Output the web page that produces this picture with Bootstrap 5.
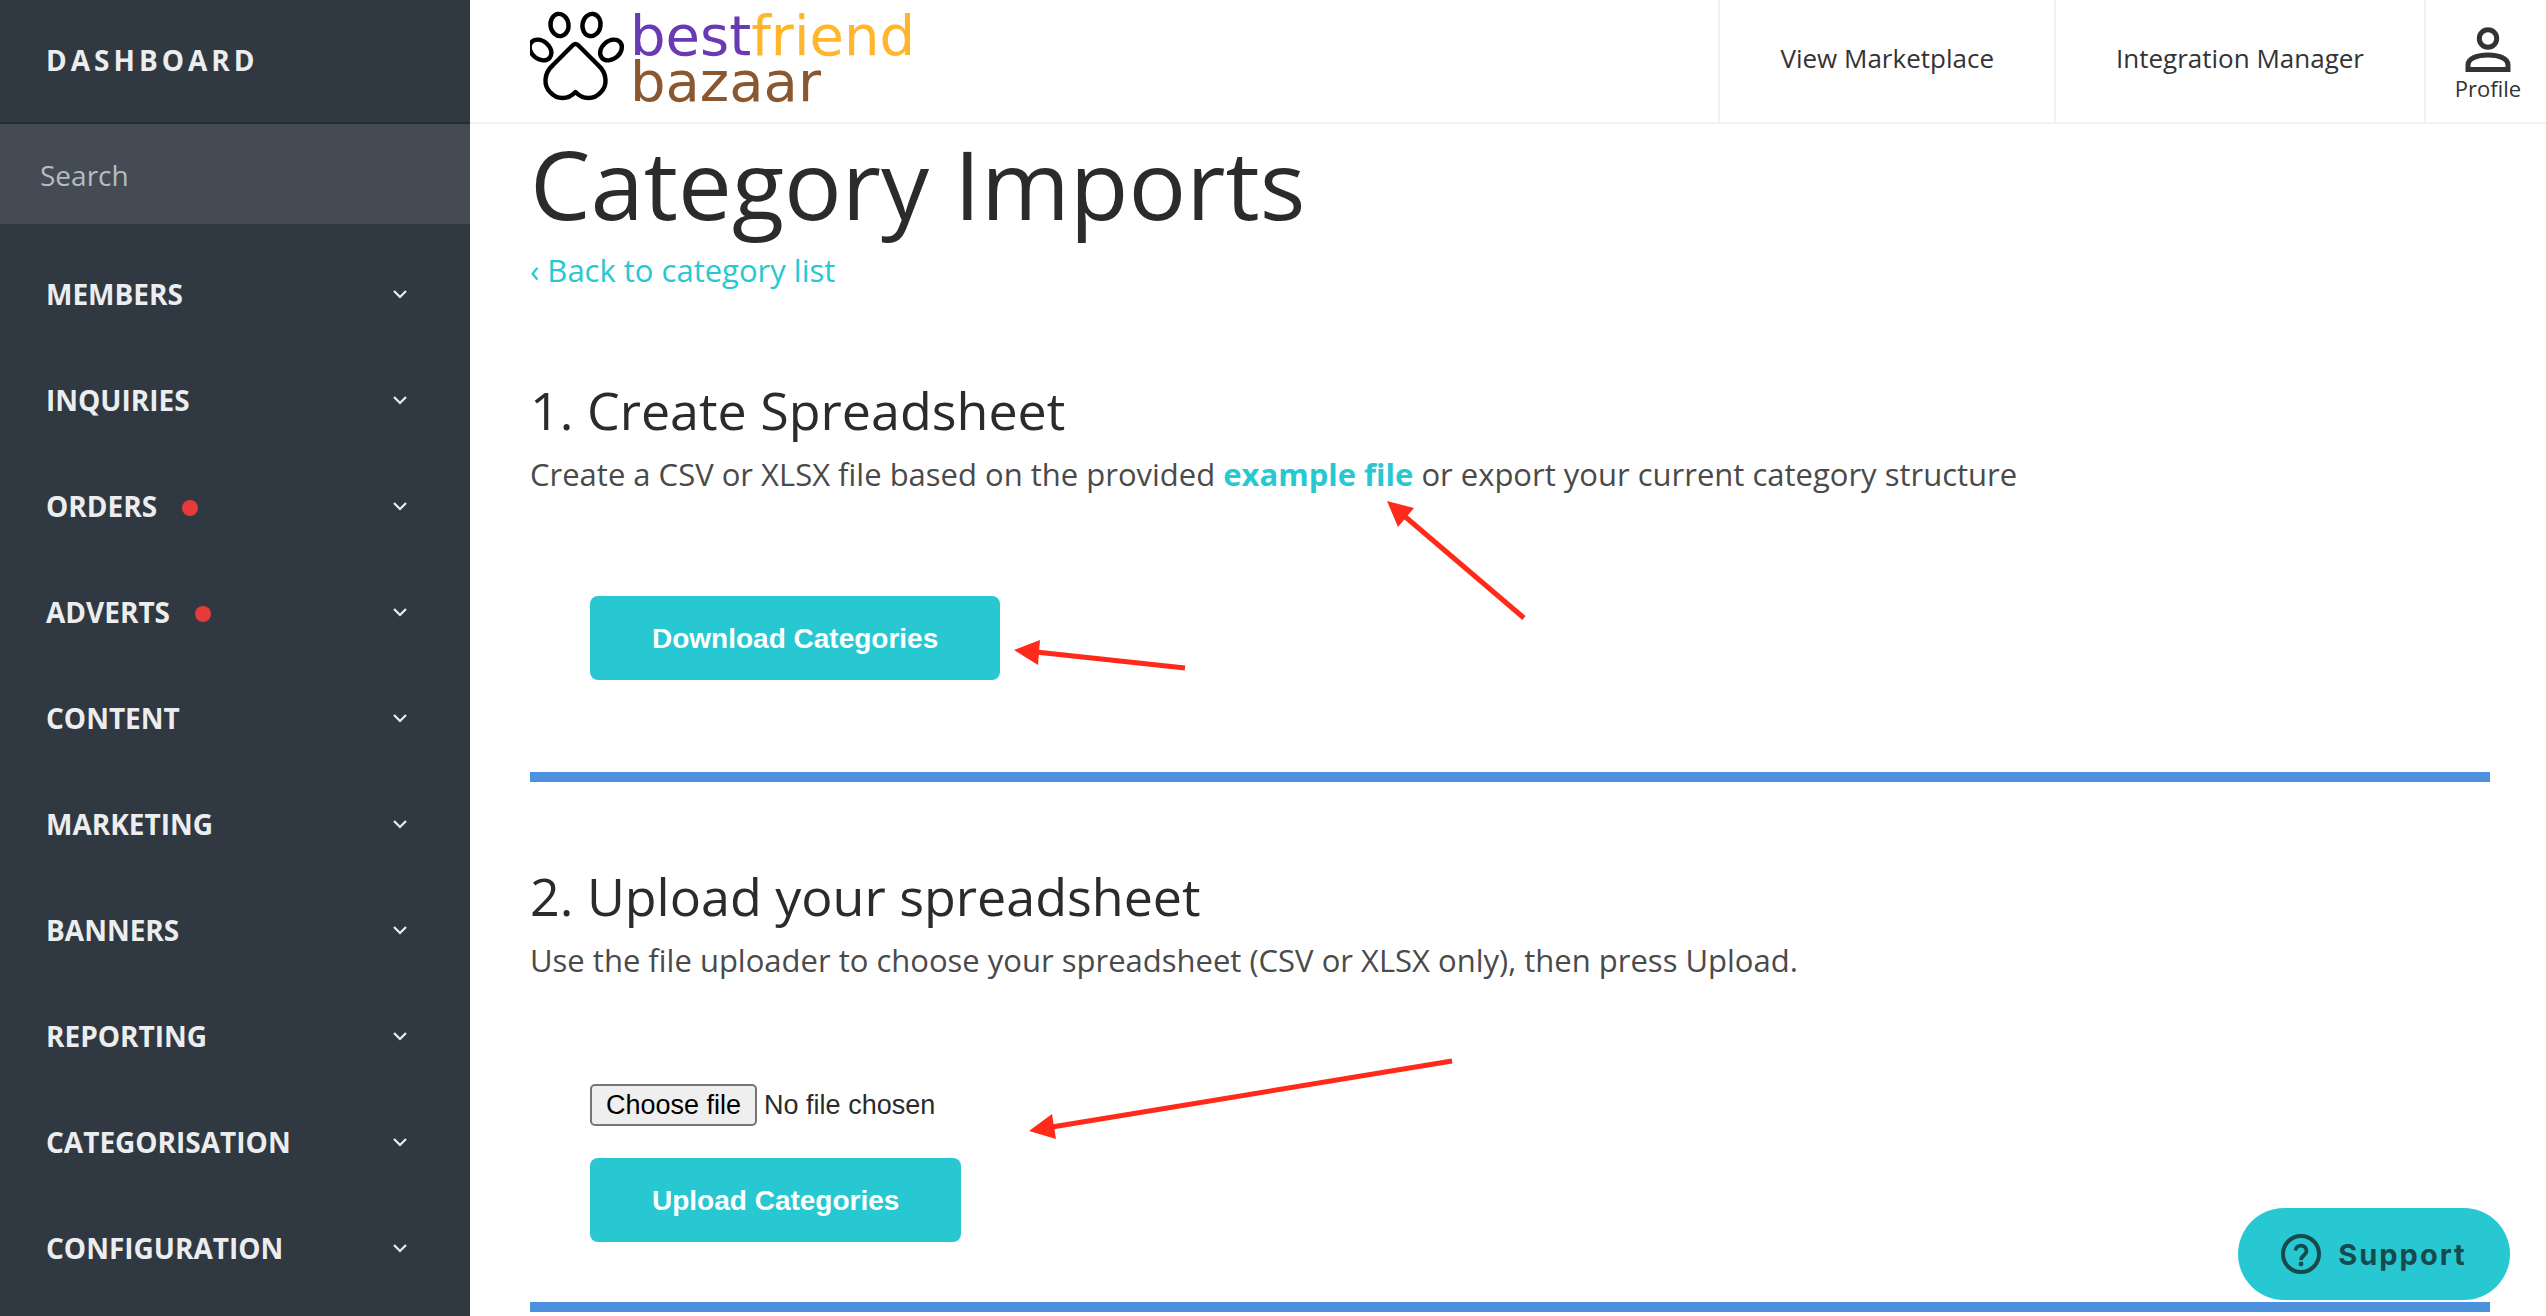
<!DOCTYPE html>
<html lang="en">
<head>
<meta charset="utf-8">
<meta name="viewport" content="width=device-width, initial-scale=1">
<title>Category Imports</title>
<link href="https://cdn.jsdelivr.net/npm/bootstrap@5.3.0/dist/css/bootstrap.min.css" rel="stylesheet">
<style>
  body { font-family: "Open Sans", "Noto Sans", sans-serif; color: #2b2b2b; background: #fff; }
  a { text-decoration: none; }
  .side { width: 470px; background: #303942; color: #ecedee; }
  .side-title { height: 124px; padding: 0 46px 2px; border-bottom: 2px solid #252d35; font-size: 28px; font-weight: 700; letter-spacing: 4px; color: #ecedee; }
  .side-search { height: 100px; padding: 2px 40px 0; border: 0; border-radius: 0; background: #454b54; color: #ecedee; font-size: 28px; font-weight: 400; }
  .side-search:focus { background: #454b54; color: #ecedee; }
  .side-search::placeholder { color: #b4bdc1; opacity: 1; }
  .side-menu { padding-top: 17px; }
  .side-link { height: 106px; padding: 0 62px 0 46px; color: #ecedee; font-size: 28px; font-weight: 700; }
  .dot { width: 16px; height: 16px; margin: 4px 0 0 25px; border-radius: 50%; background: #e53b3b; }
  .topbar { height: 124px; padding-left: 60px; border-bottom: 2px solid #f2f2f2; }
  .logo { padding-top: 10px; }
  .wordmark { padding-top: 3px; font-family: "DejaVu Sans", sans-serif; font-size: 56px; line-height: 46px; }
  .word-best { color: #6a3ab5; }
  .word-friend { color: #ffb62d; }
  .word-bazaar { color: #8b572f; }
  .top-link { padding: 0 60px 6px; border-left: 2px solid #f2f2f2; color: #333; font-size: 26px; }
  .top-profile { width: 122px; padding: 8px 0 0 4px; border-left: 2px solid #f2f2f2; color: #333; font-size: 22px; line-height: 30px; }
  .page { padding: 0 56px 0 60px; font-size: 31px; line-height: 48px; color: #4a4a4a; }
  .page h1 { font-size: 96px; line-height: 118px; font-weight: 400; margin: 0 0 6px; color: #2b2b2b; }
  .page h2 { font-size: 52px; line-height: 64px; font-weight: 400; margin: 0 0 8px; color: #2b2b2b; }
  .page a { color: #28c8d2; }
  .back-link { line-height: 44px; margin-bottom: 86px; }
  .step-upload { padding-top: 82px; }
  .actions { padding: 98px 0 92px 60px; }
  .upload-form { padding: 100px 0 60px 60px; gap: 32px; }
  .btn-teal { height: 84px; padding: 2px 62px 0; border: 0; border-radius: 8px; background: #28c8d2; color: #fff; font: bold 28px "Liberation Sans", Arial, sans-serif; }
  .btn-teal:hover { background: #20b5be; color: #fff; }
  .rule { height: 10px; margin: 0; border: 0; opacity: 1; background: #4c90de; }
  .file-row { height: 42px; gap: 7px; font: 27px "Liberation Sans", Arial, sans-serif; color: #2b2b2b; }
  .file-btn { height: 42px; padding: 0 14px; border: 2px solid #767676; border-radius: 5px; background: #efefef; color: #000; line-height: 39px; }
  .arrows { left: 0; top: 0; pointer-events: none; }
  .support { right: 36px; bottom: 16px; width: 272px; height: 92px; gap: 17px; border: 0; border-radius: 46px; background: #28c8d2; color: #17494d; font: bold 29px Inter, sans-serif; letter-spacing: 2px; }
</style>
<script src="https://cdn.jsdelivr.net/npm/bootstrap@5.3.0/dist/js/bootstrap.bundle.min.js"></script>
</head>
<body>
<svg class="d-none" aria-hidden="true">
  <symbol id="chev" viewBox="0 0 16 10"><path d="M2 2l6 6 6-6" fill="none" stroke="currentColor" stroke-width="2.2"/></symbol>
</svg>
<div class="d-flex min-vh-100 position-relative">
  <aside class="side flex-shrink-0">
    <a href="#" class="side-title d-flex align-items-center">DASHBOARD</a>
    <input type="search" class="side-search form-control shadow-none" placeholder="Search" aria-label="Search">
    <nav class="side-menu nav flex-column">
      <a href="#" class="side-link d-flex align-items-center">MEMBERS<svg class="ms-auto" width="16" height="10"><use href="#chev"/></svg></a>
      <a href="#" class="side-link d-flex align-items-center">INQUIRIES<svg class="ms-auto" width="16" height="10"><use href="#chev"/></svg></a>
      <a href="#" class="side-link d-flex align-items-center">ORDERS<span class="dot"></span><svg class="ms-auto" width="16" height="10"><use href="#chev"/></svg></a>
      <a href="#" class="side-link d-flex align-items-center">ADVERTS<span class="dot"></span><svg class="ms-auto" width="16" height="10"><use href="#chev"/></svg></a>
      <a href="#" class="side-link d-flex align-items-center">CONTENT<svg class="ms-auto" width="16" height="10"><use href="#chev"/></svg></a>
      <a href="#" class="side-link d-flex align-items-center">MARKETING<svg class="ms-auto" width="16" height="10"><use href="#chev"/></svg></a>
      <a href="#" class="side-link d-flex align-items-center">BANNERS<svg class="ms-auto" width="16" height="10"><use href="#chev"/></svg></a>
      <a href="#" class="side-link d-flex align-items-center">REPORTING<svg class="ms-auto" width="16" height="10"><use href="#chev"/></svg></a>
      <a href="#" class="side-link d-flex align-items-center">CATEGORISATION<svg class="ms-auto" width="16" height="10"><use href="#chev"/></svg></a>
      <a href="#" class="side-link d-flex align-items-center">CONFIGURATION<svg class="ms-auto" width="16" height="10"><use href="#chev"/></svg></a>
    </nav>
  </aside>

  <div class="flex-grow-1">
    <header class="topbar d-flex">
      <a href="#" class="logo d-flex align-items-start me-auto">
        <svg class="flex-shrink-0" width="100" height="92" viewBox="0 0 100 92" fill="none" stroke="#000" stroke-width="4.4">
          <ellipse cx="29.500" cy="15" rx="9" ry="11.2" transform="rotate(-8 29.500 15)"/>
          <ellipse cx="61.500" cy="15" rx="9" ry="11.200" transform="rotate(10 61.500 15)"/>
          <ellipse cx="10.500" cy="40" rx="12" ry="9" transform="rotate(40 10.500 40)"/>
          <ellipse cx="81" cy="40" rx="12" ry="9" transform="rotate(-40 81 40)"/>
          <path d="M42 36Q45.500 32 49 36L68 55C78 64 77 76 71 82C64 90 53 90 45.500 82C38 90 27 90 20 82C14 76 13 64 23 55Z" stroke-linejoin="round"/>
        </svg>
        <span class="wordmark d-block">
          <span class="word-best">best</span><span class="word-friend">friend</span><br>
          <span class="word-bazaar">bazaar</span>
        </span>
      </a>
      <a href="#" class="top-link d-flex align-items-center">View Marketplace</a>
      <a href="#" class="top-link d-flex align-items-center">Integration Manager</a>
      <a href="#" class="top-profile d-flex flex-column align-items-center justify-content-center">
        <svg width="46" height="46" viewBox="0 0 46 46" fill="none" stroke="#333" stroke-width="5">
          <circle cx="23" cy="11.500" r="8.700"/>
          <path d="M3 42.500V38C3 31 13 28 23 28S43 31 43 38V42.500Z"/>
        </svg>
        Profile
      </a>
    </header>

    <main class="page">
      <h1>Category Imports</h1>
      <div class="back-link"><a href="#">‹ Back to category list</a></div>

      <section>
        <h2>1. Create Spreadsheet</h2>
        <p class="m-0">Create a CSV or XLSX file based on the provided <a href="#" class="fw-bold">example file</a> or export your current category structure</p>
        <div class="actions d-flex">
          <button type="button" class="btn btn-teal">Download Categories</button>
        </div>
      </section>
      <hr class="rule">
      <section class="step-upload">
        <h2>2. Upload your spreadsheet</h2>
        <p class="m-0">Use the file uploader to choose your spreadsheet (CSV or XLSX only), then press Upload.</p>
        <form class="upload-form d-flex flex-column align-items-start">
          <div class="file-row d-flex align-items-center position-relative">
            <input type="file" id="sheet" class="visually-hidden" accept=".csv,.xlsx">
            <label for="sheet" class="file-btn">Choose file</label>
            <span>No file chosen</span>
          </div>
          <button type="button" class="btn btn-teal">Upload Categories</button>
        </form>
      </section>
      <hr class="rule">
    </main>
  </div>

  <svg class="arrows position-absolute" width="1600" height="1200" viewBox="0 0 1600 1200" fill="#ff2a1a" stroke="#ff2a1a" stroke-width="5" aria-hidden="true">
    <path d="M1524 618L1402 514"/><path stroke="none" d="M1387 501L1414 508L1398 527Z"/>
    <path d="M1185 668L1036 652"/><path stroke="none" d="M1014 650L1040 640L1038 665Z"/>
    <path d="M1452 1061L1052 1127"/><path stroke="none" d="M1029 1131L1052 1114L1056 1139Z"/>
  </svg>
</div>

<button type="button" class="support position-fixed d-flex align-items-center justify-content-center">
  <svg width="40" height="40" viewBox="0 0 40 40" fill="none" stroke="currentColor" stroke-width="4">
    <circle cx="20" cy="20" r="18"/>
    <path d="M14.500 16.500C15 10 25.500 10 25.500 17C25.500 21 20 21.500 20 26" stroke-width="3.800"/>
    <circle cx="20" cy="30" r="2.400" fill="currentColor" stroke="none"/>
  </svg>
  Support
</button>
</body>
</html>
